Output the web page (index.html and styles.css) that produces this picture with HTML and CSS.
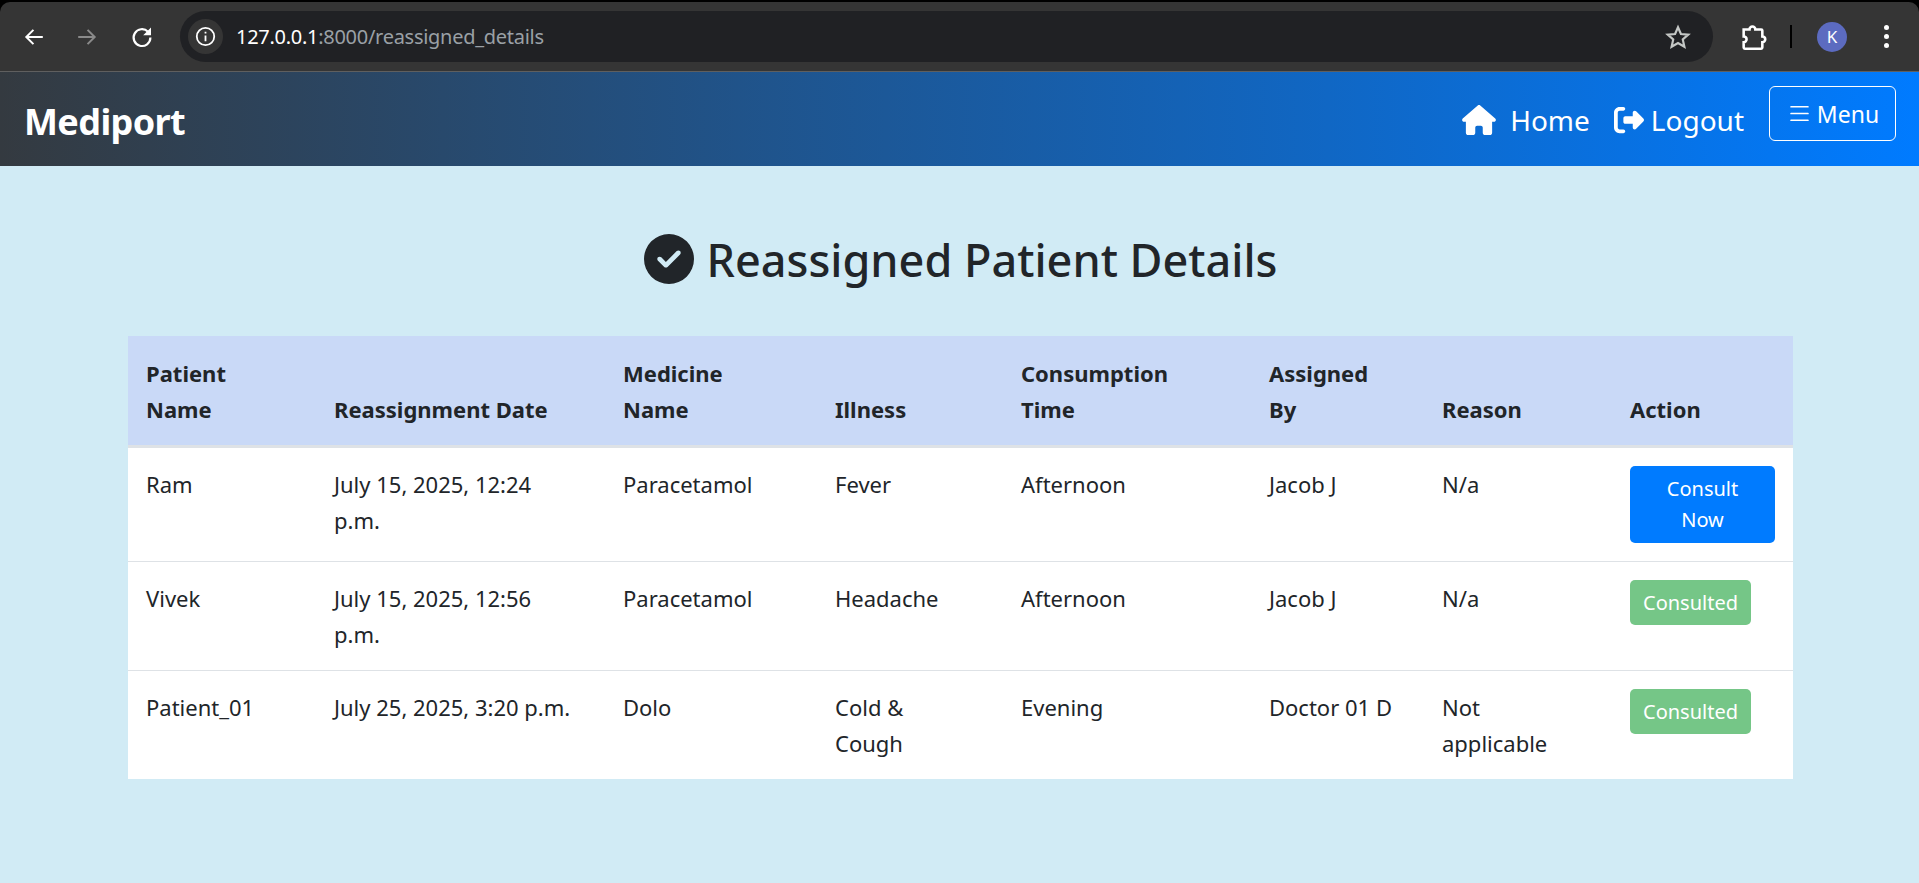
FILE: index.html
```html
<!DOCTYPE html>
<html lang="en">
<head>
  <meta charset="UTF-8">
  <title>Reassigned Patient Details</title>
  <link rel="stylesheet" href="styles.css">
</head>
<body>
  <div class="browser-bar">
    <div class="toolbar">
      <svg class="tool-icon back" viewBox="0 0 20 20"><path d="M18 10H3M9.500 3.500L3 10l6.500 6.500"/></svg>
      <svg class="tool-icon forward" viewBox="0 0 20 20"><path d="M2 10h15M10.500 3.500L17 10l-6.500 6.500"/></svg>
      <svg class="tool-icon reload" viewBox="0 0 20 20"><path d="M15 5.600A7 7 0 1 0 17 10.500"/><path class="reload-head" d="M17.500 2v6.500H11z"/></svg>
      <div class="omnibox">
        <span class="info-chip">
          <svg viewBox="0 0 20 20"><circle cx="10" cy="10" r="8.300"/><path d="M10 9v5.500M10 5.500v1.600"/></svg>
        </span>
        <span class="url"><span class="url-host">127.0.0.1</span>:8000/reassigned_details</span>
        <svg class="star" viewBox="0 0 24 24"><path d="M12 3l2.700 6.200 6.800.6-5.100 4.500 1.500 6.700L12 17.500 6.100 21l1.500-6.700-5.100-4.500 6.800-.6z"/></svg>
      </div>
      <svg class="puzzle" viewBox="0 0 24 24"><path d="M4 5.500h5a2.500 2.500 0 0 1 5 0h5a1 1 0 0 1 1 1v5a2.500 2.500 0 0 1 0 5V21a1 1 0 0 1-1 1H5a1 1 0 0 1-1-1v-4.500a2.500 2.500 0 0 0 0-5z"/></svg>
      <span class="divider"></span>
      <span class="avatar">K</span>
      <span class="kebab"><i></i><i></i><i></i></span>
    </div>
  </div>

  <nav class="navbar">
    <a class="brand" href="#">Mediport</a>
    <div class="nav-links">
      <a class="nav-link" href="#">
        <svg class="home-icon" viewBox="0 0 576 512"><path d="M575.800 255.500c0 18-15 32.100-32 32.100h-32l.7 160.200c0 2.700-.2 5.400-.5 8.100V472c0 22.100-17.900 40-40 40H456c-1.100 0-2.200 0-3.300-.1c-1.400 .1-2.800 .1-4.200 .1H416 392c-22.100 0-40-17.900-40-40V448 384c0-17.700-14.300-32-32-32H256c-17.700 0-32 14.300-32 32v64 24c0 22.100-17.900 40-40 40H160 128.100c-1.500 0-3-.1-4.500-.2c-1.200 .1-2.400 .2-3.600 .2H104c-22.100 0-40-17.900-40-40V360c0-.9 0-1.900 .1-2.800V287.600H32c-18 0-32-14-32-32.100c0-9 3-17 10-24L266.400 8c7-7 15-8 22-8s15 2 21 7L564.800 231.500c8 7 12 15 11 24z"/></svg>
        Home
      </a>
      <a class="nav-link logout" href="#">
        <svg class="logout-icon" viewBox="0 0 512 512"><path d="M377.900 105.900L500.700 228.700c7.200 7.200 11.300 17.100 11.300 27.300s-4.100 20.100-11.300 27.300L377.900 406.100c-6.400 6.400-15 9.900-24 9.900c-18.700 0-33.900-15.200-33.900-33.900l0-62.100-128 0c-17.700 0-32-14.300-32-32l0-64c0-17.700 14.300-32 32-32l128 0 0-62.100c0-18.700 15.200-33.900 33.900-33.900c9 0 17.600 3.600 24 9.900zM160 96L96 96c-17.700 0-32 14.300-32 32l0 256c0 17.700 14.300 32 32 32l64 0c17.700 0 32 14.300 32 32s-14.300 32-32 32l-64 0c-53 0-96-43-96-96L0 128C0 75 43 32 96 32l64 0c17.700 0 32 14.300 32 32s-14.300 32-32 32z"/></svg>
        Logout
      </a>
      <button class="menu-btn" type="button">
        <svg viewBox="0 0 16 16"><path d="M2.500 12a.5.500 0 0 1 .5-.5h10a.5.500 0 0 1 0 1H3a.5.500 0 0 1-.5-.5zm0-4a.5.500 0 0 1 .5-.5h10a.5.500 0 0 1 0 1H3a.5.500 0 0 1-.5-.5zm0-4a.5.500 0 0 1 .5-.5h10a.5.500 0 0 1 0 1H3a.5.500 0 0 1-.5-.5z"/></svg>
        Menu
      </button>
    </div>
  </nav>

  <main class="container">
    <h2 class="page-title">
      <svg viewBox="0 0 512 512"><path d="M256 512A256 256 0 1 0 256 0a256 256 0 1 0 0 512zM369 209L241 337c-9.400 9.400-24.600 9.400-33.900 0l-64-64c-9.400-9.400-9.400-24.600 0-33.900s24.600-9.400 33.900 0l47 47L335 175c9.400-9.400 24.600-9.400 33.900 0s9.400 24.600 0 33.900z"/></svg>
      Reassigned Patient Details
    </h2>

    <table class="patients">
      <colgroup>
        <col class="col-name">
        <col class="col-date">
        <col class="col-medicine">
        <col class="col-illness">
        <col class="col-time">
        <col class="col-by">
        <col class="col-reason">
        <col class="col-action">
      </colgroup>
      <thead>
        <tr>
          <th>Patient<br>Name</th>
          <th>Reassignment Date</th>
          <th>Medicine<br>Name</th>
          <th>Illness</th>
          <th>Consumption<br>Time</th>
          <th>Assigned<br>By</th>
          <th>Reason</th>
          <th>Action</th>
        </tr>
      </thead>
      <tbody>
        <tr>
          <td>Ram</td>
          <td>July 15, 2025, 12:24<br>p.m.</td>
          <td>Paracetamol</td>
          <td>Fever</td>
          <td>Afternoon</td>
          <td>Jacob J</td>
          <td>N/a</td>
          <td><a class="btn btn-consult" href="#">Consult<br>Now</a></td>
        </tr>
        <tr>
          <td>Vivek</td>
          <td>July 15, 2025, 12:56<br>p.m.</td>
          <td>Paracetamol</td>
          <td>Headache</td>
          <td>Afternoon</td>
          <td>Jacob J</td>
          <td>N/a</td>
          <td><span class="btn btn-done">Consulted</span></td>
        </tr>
        <tr>
          <td>Patient_01</td>
          <td>July 25, 2025, 3:20 p.m.</td>
          <td>Dolo</td>
          <td>Cold &amp;<br>Cough</td>
          <td>Evening</td>
          <td>Doctor 01 D</td>
          <td>Not<br>applicable</td>
          <td><span class="btn btn-done">Consulted</span></td>
        </tr>
      </tbody>
    </table>
  </main>
</body>
</html>
```

FILE: styles.css
```css
* {
  box-sizing: border-box;
}
body {
  margin: 0;
  min-height: 883px;
  font-family: "Noto Sans", "Open Sans", sans-serif;
  background-color: #d1ebf5;
  color: #212529;
}
a {
  color: inherit;
  text-decoration: none;
}

/* browser toolbar */
.browser-bar {
  background: #000;
  padding-top: 2px;
  border-bottom: 1px solid #5f5f5f;
}
.toolbar {
  height: 69px;
  background: #353535;
  border-radius: 10px 10px 0 0;
  display: flex;
  align-items: center;
  padding: 0 30px 0 23px;
}
.tool-icon {
  width: 22px;
  height: 22px;
  fill: none;
  stroke: #fff;
  stroke-width: 1.8;
  flex: none;
}
.forward {
  margin-left: 31px;
  stroke: #8a8a8a;
}
.reload {
  width: 24px;
  height: 24px;
  margin-left: 32px;
}
.reload-head {
  fill: #fff;
  stroke: none;
}
.omnibox {
  flex: 1;
  height: 51px;
  margin: 0 26px 0 26px;
  padding: 0 22px 0 8px;
  background: #202124;
  border-radius: 26px;
  display: flex;
  align-items: center;
}
.info-chip {
  width: 35px;
  height: 35px;
  border-radius: 50%;
  background: #353535;
  display: flex;
  align-items: center;
  justify-content: center;
}
.info-chip svg {
  width: 21px;
  height: 21px;
  fill: none;
  stroke: #fff;
  stroke-width: 1.7;
}
.url {
  margin-left: 13px;
  flex: 1;
  font-size: 20px;
  letter-spacing: -.28px;
  color: #9aa0a6;
}
.url-host {
  color: #fff;
}
.star {
  width: 26px;
  height: 26px;
  fill: none;
  stroke: #c4c7c5;
  stroke-width: 2;
}
.puzzle {
  width: 28px;
  height: 28px;
  fill: none;
  stroke: #fff;
  stroke-width: 2.200;
  flex: none;
}
.divider {
  width: 2px;
  height: 23px;
  margin: 0 25px 0 23px;
  background: #000;
}
.avatar {
  width: 30px;
  height: 30px;
  border-radius: 50%;
  background: #5c6bc0;
  color: #fff;
  font-size: 17px;
  display: flex;
  align-items: center;
  justify-content: center;
}
.kebab {
  margin-left: 37px;
  display: flex;
  flex-direction: column;
  gap: 4px;
}
.kebab i {
  width: 5px;
  height: 5px;
  border-radius: 50%;
  background: #fff;
}

/* navbar */
.navbar {
  height: 94px;
  padding: 0 23px 0 24px;
  background: linear-gradient(to right, #343a40, #007bff);
  display: flex;
  align-items: center;
  justify-content: space-between;
  color: #fff;
}
.brand {
  padding-top: 5px;
  font-size: 36px;
  font-weight: 700;
  letter-spacing: -.6px;
}
.nav-links {
  display: flex;
  align-items: center;
}
.nav-link {
  display: flex;
  align-items: center;
  font-size: 28px;
  gap: 14px;
  padding-top: 2px;
}
.logout {
  margin-left: 24px;
  gap: 7px;
}
.home-icon {
  width: 34px;
  height: 30px;
  fill: #fff;
}
.logout-icon {
  width: 30px;
  height: 30px;
  fill: #fff;
}
.menu-btn {
  margin-left: 25px;
  margin-bottom: 11px;
  width: 127px;
  height: 55px;
  background: transparent;
  border: 1.5px solid #fff;
  border-radius: 6px;
  color: #fff;
  font-family: inherit;
  font-size: 23px;
  display: flex;
  align-items: center;
  justify-content: center;
  gap: 4px;
}
.menu-btn svg {
  width: 27px;
  height: 27px;
  fill: #fff;
}

/* main content */
.container {
  padding: 62px 126px 0 128px;
}
.page-title {
  margin: 0 0 46px;
  height: 62px;
  display: flex;
  align-items: center;
  justify-content: center;
  gap: 13px;
  font-size: 45px;
  font-weight: 500;
}
.page-title svg {
  width: 50px;
  height: 50px;
  fill: #212529;
}
.patients {
  width: 100%;
  table-layout: fixed;
  border-collapse: collapse;
  background: #fff;
  font-size: 22px;
  line-height: 36px;
}
.col-name { width: 188px; }
.col-date { width: 289px; }
.col-medicine { width: 212px; }
.col-illness { width: 186px; }
.col-time { width: 248px; }
.col-by { width: 173px; }
.col-reason { width: 188px; }
.col-action { width: 181px; }

.patients th {
  padding: 18px;
  height: 110px;
  background: #c9d9f7;
  border-bottom: 3px solid #dee2e6;
  text-align: left;
  vertical-align: bottom;
  font-weight: 700;
}
.patients td {
  padding: 18px 18px 18px;
  border-top: 1.5px solid #dee2e6;
  vertical-align: top;
}
.patients tbody tr:first-child td {
  border-top: 0;
}
.btn {
  display: inline-block;
  font-size: 20px;
  line-height: 31px;
  text-align: center;
  color: #fff;
  border-radius: 5px;
  padding: 7px 13px;
}
.btn-consult {
  display: block;
  padding: 7.500px 13px;
  background: #007bff;
}
.btn-done {
  background: #75c687;
}
```
